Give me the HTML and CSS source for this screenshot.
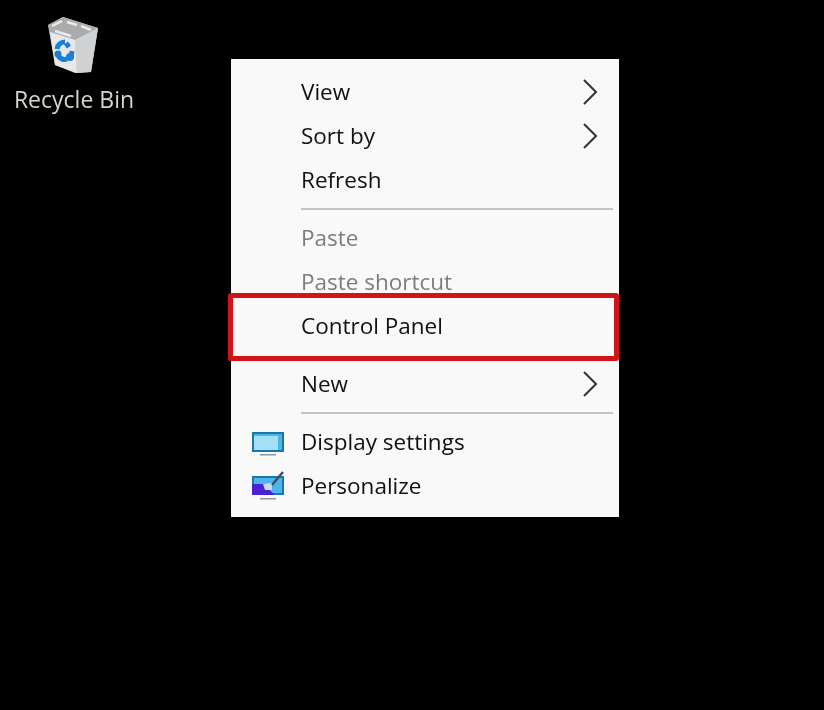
FILE: index.html
```html
<!DOCTYPE html>
<html lang="en">
  <head>
    <meta charset="UTF-8" />
    <meta name="viewport" content="width=device-width, initial-scale=1.0" />
    <title>Desktop context menu</title>
    <link rel="stylesheet" href="styles.css">
  </head>
  <body>
    <div class="desktop-icon">
      <svg class="bin-icon" width="54" height="58" viewBox="0 0 54 58">
        <polygon points="1,9 16,1 51,12 44,56 28,57 8,49" fill="#c4c6c8" />
        <polygon points="1,9 16,1 51,12 28,24 3,16" fill="#a9abad" />
        <polygon points="3,16 28,24 30,57 8,49" fill="#e6e8ea" />
        <polygon points="28,24 51,12 44,56 30,57" fill="#cfd1d3" />
        <path d="M5 10l10-5M20 6l10 3M34 10l10 4M8 15l16 5" stroke="#e8eaeb" stroke-width="2.5" fill="none" />
        <g fill="none" stroke="#1a7fd6" stroke-width="5">
          <path d="M10 33a8 8 0 0 1 8-7" />
          <path d="M19 27l3 4" />
          <path d="M11 39a7 7 0 0 0 9 4" />
          <path d="M25 35l-1 7" />
        </g>
        <circle cx="11" cy="38" r="3.5" fill="#1a7fd6" />
        <circle cx="23" cy="41" r="4" fill="#1a7fd6" />
      </svg>
      <span class="desktop-label">Recycle Bin</span>
    </div>

    <div class="menu">
      <div class="item">
        <span>View</span>
        <svg class="arrow" width="16" height="26" viewBox="0 0 16 26"><path d="M2 1l12 12L2 25" /></svg>
      </div>
      <div class="item">
        <span>Sort by</span>
        <svg class="arrow" width="16" height="26" viewBox="0 0 16 26"><path d="M2 1l12 12L2 25" /></svg>
      </div>
      <div class="item"><span>Refresh</span></div>
      <div class="sep"></div>
      <div class="item disabled"><span>Paste</span></div>
      <div class="item disabled"><span>Paste shortcut</span></div>
      <div class="item marked"><span>Control Panel</span></div>
      <div class="sep blank"></div>
      <div class="item">
        <span>New</span>
        <svg class="arrow" width="16" height="26" viewBox="0 0 16 26"><path d="M2 1l12 12L2 25" /></svg>
      </div>
      <div class="sep"></div>
      <div class="item">
        <svg class="item-icon" width="34" height="26" viewBox="0 0 34 26">
          <rect x="1" y="0" width="32" height="20" fill="#1878a8" />
          <rect x="3" y="2" width="28" height="16" fill="#4ab5e5" />
          <rect x="3" y="4" width="24" height="14" fill="#a5dff6" />
          <rect x="9" y="22" width="16" height="1.5" fill="#8a97a3" />
        </svg>
        <span>Display settings</span>
      </div>
      <div class="item">
        <svg class="item-icon pen" width="34" height="30" viewBox="0 0 34 30">
          <rect x="1" y="6" width="32" height="19" fill="#1878a8" />
          <rect x="3" y="8" width="28" height="15" fill="#4fb4ee" />
          <polygon points="1,14 12,14 24,25 1,25" fill="#4a22d6" />
          <polygon points="12,14 21,13 21,20 14,20" fill="#c9dcef" />
          <path d="M21 15L32 2" stroke="#3d4f63" stroke-width="2.5" />
          <rect x="9" y="28" width="16" height="1.5" fill="#8a97a3" />
        </svg>
        <span>Personalize</span>
      </div>
    </div>
  </body>
</html>
```

FILE: styles.css
```css
html,
body {
  height: 100%;
}
body {
  margin: 0;
  background-color: #000;
  font-family: "Open Sans", "Noto Sans", sans-serif;
  overflow: hidden;
}
.desktop-icon {
  position: absolute;
  left: 0;
  top: 16px;
  width: 148px;
  display: flex;
  flex-direction: column;
  align-items: center;
}
.bin-icon {
  display: block;
  filter: blur(0.6px);
}
.desktop-label {
  margin-top: 11px;
  color: #d6d6ce;
  font-size: 23px;
  line-height: 28px;
  filter: blur(0.4px);
}
.menu {
  position: absolute;
  left: 231px;
  top: 59px;
  width: 388px;
  height: 458px;
  box-sizing: border-box;
  padding: 11px 0 9px;
  background-color: #f9f9f9;
  color: #111;
}
.item {
  position: relative;
  height: 44px;
  display: flex;
  align-items: center;
  padding-left: 70px;
  padding-bottom: 2px;
  box-sizing: border-box;
  font-size: 22.5px;
  filter: blur(0.3px);
}
.disabled {
  color: #7d7d7d;
}
.sep {
  height: 2px;
  margin: 6px 6px 6px 70px;
  background-color: #c4c4c4;
}
.blank {
  background-color: transparent;
}
.arrow {
  position: absolute;
  left: 351px;
  top: 9px;
  fill: none;
  stroke: #3a2c3a;
  stroke-width: 2;
}
.item-icon {
  position: absolute;
  left: 20px;
  top: 12px;
}
.pen {
  top: 6px;
}
.marked::after {
  content: "";
  position: absolute;
  left: -3px;
  right: 0;
  top: -11px;
  bottom: -13px;
  border: 5px solid #d3131a;
  border-radius: 3px;
}
```
